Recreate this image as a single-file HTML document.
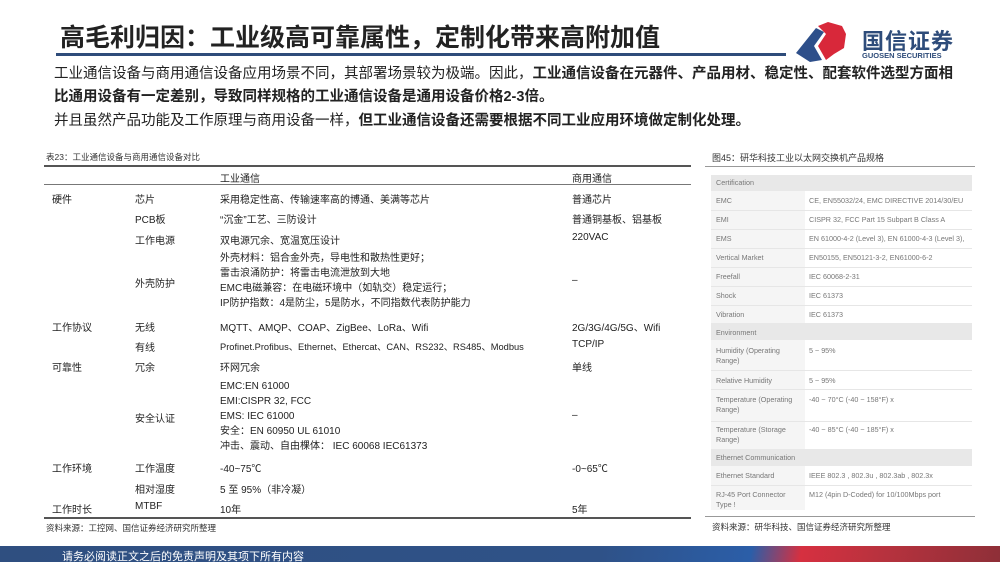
<!DOCTYPE html>
<html><head><meta charset="utf-8"><style>
*{margin:0;padding:0;box-sizing:border-box}
body{width:1000px;height:562px;position:relative;overflow:hidden;background:#fff;font-family:"Liberation Sans","Noto Sans CJK SC",sans-serif;color:#222}
.a{position:absolute;white-space:nowrap}
.t{font-size:25px;font-weight:bold;color:#222;line-height:28px}
.p{font-size:14.5px;color:#222;line-height:18px}
.s{font-size:10px;color:#222}
.c{font-size:8.5px;color:#333}
.r{position:absolute;left:711px;width:261px;height:1px;background:#e6e6e6}
.rt{position:absolute;font-size:7.2px;color:#777;white-space:nowrap;line-height:10px}
</style></head><body>
<div class="a t" style="left:60px;top:24px">高毛利归因：工业级高可靠属性，定制化带来高附加值</div>
<div class="a" style="left:56px;top:53px;width:730px;height:3px;background:#2e4c7a"></div>
<svg class="a" style="left:794px;top:20px" width="64" height="44" viewBox="0 0 64 44"><path d="M2 33 L22 8 L30 12 L20 26 L28 40 L16 42 Z" fill="#2e4f8a"/><path d="M24 6 L34 2 L48 6 L52 14 L50 28 L40 34 L32 40 L24 26 L32 14 Z" fill="#d8283a"/></svg>
<div class="a" style="left:862px;top:24px;font-size:22px;font-weight:bold;color:#2e4c7a;letter-spacing:1px">国信证券</div>
<div class="a" style="left:862px;top:51px;font-size:7.5px;font-weight:bold;color:#2e4c7a">GUOSEN SECURITIES</div>
<div class="a p" style="left:54px;top:65px">工业通信设备与商用通信设备应用场景不同，其部署场景较为极端。因此，<b>工业通信设备在元器件、产品用材、稳定性、配套软件选型方面相</b></div>
<div class="a p" style="left:54px;top:88px"><b>比通用设备有一定差别，导致同样规格的工业通信设备是通用设备价格2-3倍。</b></div>
<div class="a p" style="left:54px;top:112px">并且虽然产品功能及工作原理与商用设备一样，<b>但工业通信设备还需要根据不同工业应用环境做定制化处理。</b></div>

<div class="a c" style="left:46px;top:151px">表23：工业通信设备与商用通信设备对比</div>
<div class="a" style="left:44px;top:165px;width:647px;height:2px;background:#555"></div>
<div class="a" style="left:44px;top:184px;width:647px;height:1px;background:#777"></div>
<div class="a" style="left:44px;top:517px;width:647px;height:2px;background:#555"></div>
<div class="a s" style="left:220px;top:170px">工业通信</div><div class="a s" style="left:572px;top:170px">商用通信</div>
<div class="a s" style="left:52px;top:191px">硬件</div><div class="a s" style="left:135px;top:191px">芯片</div><div class="a s" style="left:220px;top:191px">采用稳定性高、传输速率高的博通、美满等芯片</div><div class="a s" style="left:572px;top:191px">普通芯片</div>
<div class="a s" style="left:135px;top:211px">PCB板</div><div class="a s" style="left:220px;top:211px">“沉金”工艺、三防设计</div><div class="a s" style="left:572px;top:211px">普通铜基板、铝基板</div>
<div class="a s" style="left:135px;top:232px">工作电源</div><div class="a s" style="left:220px;top:232px">双电源冗余、宽温宽压设计</div><div class="a s" style="left:572px;top:232px">220VAC</div>
<div class="a s" style="left:220px;top:251px;line-height:15px">外壳材料：铝合金外壳，导电性和散热性更好；<br>雷击浪涌防护：将雷击电流泄放到大地<br>EMC电磁兼容：在电磁环境中（如轨交）稳定运行；<br>IP防护指数：4是防尘，5是防水，不同指数代表防护能力</div>
<div class="a s" style="left:135px;top:275px">外壳防护</div><div class="a s" style="left:572px;top:275px">–</div>
<div class="a s" style="left:52px;top:319px">工作协议</div><div class="a s" style="left:135px;top:319px">无线</div><div class="a s" style="left:220px;top:319px">MQTT、AMQP、COAP、ZigBee、LoRa、Wifi</div><div class="a s" style="left:572px;top:319px">2G/3G/4G/5G、Wifi</div>
<div class="a s" style="left:135px;top:339px">有线</div><div class="a s" style="left:220px;top:339px;font-size:9.3px">Profinet.Profibus、Ethernet、Ethercat、CAN、RS232、RS485、Modbus</div><div class="a s" style="left:572px;top:339px">TCP/IP</div>
<div class="a s" style="left:52px;top:359px">可靠性</div><div class="a s" style="left:135px;top:359px">冗余</div><div class="a s" style="left:220px;top:359px">环网冗余</div><div class="a s" style="left:572px;top:359px">单线</div>
<div class="a s" style="left:220px;top:379px;line-height:15px">EMC:EN 61000<br>EMI:CISPR 32, FCC<br>EMS: IEC 61000<br>安全：EN 60950 UL 61010<br>冲击、震动、自由棵体： IEC 60068 IEC61373</div>
<div class="a s" style="left:135px;top:410px">安全认证</div><div class="a s" style="left:572px;top:410px">–</div>
<div class="a s" style="left:52px;top:460px">工作环境</div><div class="a s" style="left:135px;top:460px">工作温度</div><div class="a s" style="left:220px;top:460px">-40~75℃</div><div class="a s" style="left:572px;top:460px">-0~65℃</div>
<div class="a s" style="left:135px;top:481px">相对湿度</div><div class="a s" style="left:220px;top:481px"> 5 至 95%（非冷凝）</div>
<div class="a s" style="left:52px;top:501px">工作时长</div><div class="a s" style="left:135px;top:501px">MTBF</div><div class="a s" style="left:220px;top:501px">10年</div><div class="a s" style="left:572px;top:501px">5年</div>
<div class="a c" style="left:46px;top:522px">资料来源：工控网、国信证券经济研究所整理</div>

<div class="a c" style="left:712px;top:151px;font-size:9px">图45：研华科技工业以太网交换机产品规格</div>
<div class="a" style="left:705px;top:166px;width:270px;height:1px;background:#999"></div>
<div class="a" style="left:711px;top:175px;width:94px;height:335px;background:#f5f5f5"></div>
<div class="a" style="left:711px;top:175px;width:261px;height:16px;background:#e8e8e8"></div>
<div class="a" style="left:711px;top:323px;width:261px;height:17px;background:#e8e8e8"></div>
<div class="a" style="left:711px;top:449px;width:261px;height:17px;background:#e8e8e8"></div>
<div class="r" style="top:210px"></div><div class="r" style="top:229px"></div><div class="r" style="top:248px"></div><div class="r" style="top:267px"></div><div class="r" style="top:286px"></div><div class="r" style="top:305px"></div><div class="r" style="top:370px"></div><div class="r" style="top:389px"></div><div class="r" style="top:421px"></div><div class="r" style="top:485px"></div>
<div class="rt" style="left:716px;top:178px">Certification</div>
<div class="rt" style="left:716px;top:196px">EMC</div><div class="rt" style="left:809px;top:196px">CE, EN55032/24, EMC DIRECTIVE 2014/30/EU</div>
<div class="rt" style="left:716px;top:215px">EMI</div><div class="rt" style="left:809px;top:215px">CISPR 32, FCC Part 15 Subpart B Class A</div>
<div class="rt" style="left:716px;top:234px">EMS</div><div class="rt" style="left:809px;top:234px">EN 61000-4-2 (Level 3), EN 61000-4-3 (Level 3),</div>
<div class="rt" style="left:716px;top:253px">Vertical Market</div><div class="rt" style="left:809px;top:253px">EN50155, EN50121-3-2, EN61000-6-2</div>
<div class="rt" style="left:716px;top:272px">Freefall</div><div class="rt" style="left:809px;top:272px">IEC 60068-2-31</div>
<div class="rt" style="left:716px;top:291px">Shock</div><div class="rt" style="left:809px;top:291px">IEC 61373</div>
<div class="rt" style="left:716px;top:310px">Vibration</div><div class="rt" style="left:809px;top:310px">IEC 61373</div>
<div class="rt" style="left:716px;top:328px">Environment</div>
<div class="rt" style="left:716px;top:346px">Humidity (Operating<br>Range)</div><div class="rt" style="left:809px;top:346px">5 ~ 95%</div>
<div class="rt" style="left:716px;top:376px">Relative Humidity</div><div class="rt" style="left:809px;top:376px">5 ~ 95%</div>
<div class="rt" style="left:716px;top:395px">Temperature (Operating<br>Range)</div><div class="rt" style="left:809px;top:395px">-40 ~ 70°C (-40 ~ 158°F) x</div>
<div class="rt" style="left:716px;top:425px">Temperature (Storage<br>Range)</div><div class="rt" style="left:809px;top:425px">-40 ~ 85°C (-40 ~ 185°F) x</div>
<div class="rt" style="left:716px;top:453px">Ethernet Communication</div>
<div class="rt" style="left:716px;top:471px">Ethernet Standard</div><div class="rt" style="left:809px;top:471px">IEEE 802.3 , 802.3u , 802.3ab , 802.3x</div>
<div class="rt" style="left:716px;top:490px">RJ-45 Port Connector<br>Type !</div><div class="rt" style="left:809px;top:490px">M12 (4pin D-Coded) for 10/100Mbps port</div>
<div class="a" style="left:705px;top:516px;width:270px;height:1px;background:#999"></div>
<div class="a c" style="left:712px;top:521px">资料来源：研华科技、国信证券经济研究所整理</div>

<div class="a" style="left:0;top:546px;width:1000px;height:16px;background:linear-gradient(100deg,#2f4f80 0%,#2f5288 60%,#2b5ea8 75%,#d63040 80%,#b8323e 88%,#8e2f38 100%)"></div>
<div class="a" style="left:62px;top:548px;font-size:11px;color:#fff">请务必阅读正文之后的免责声明及其项下所有内容</div>
</body></html>
